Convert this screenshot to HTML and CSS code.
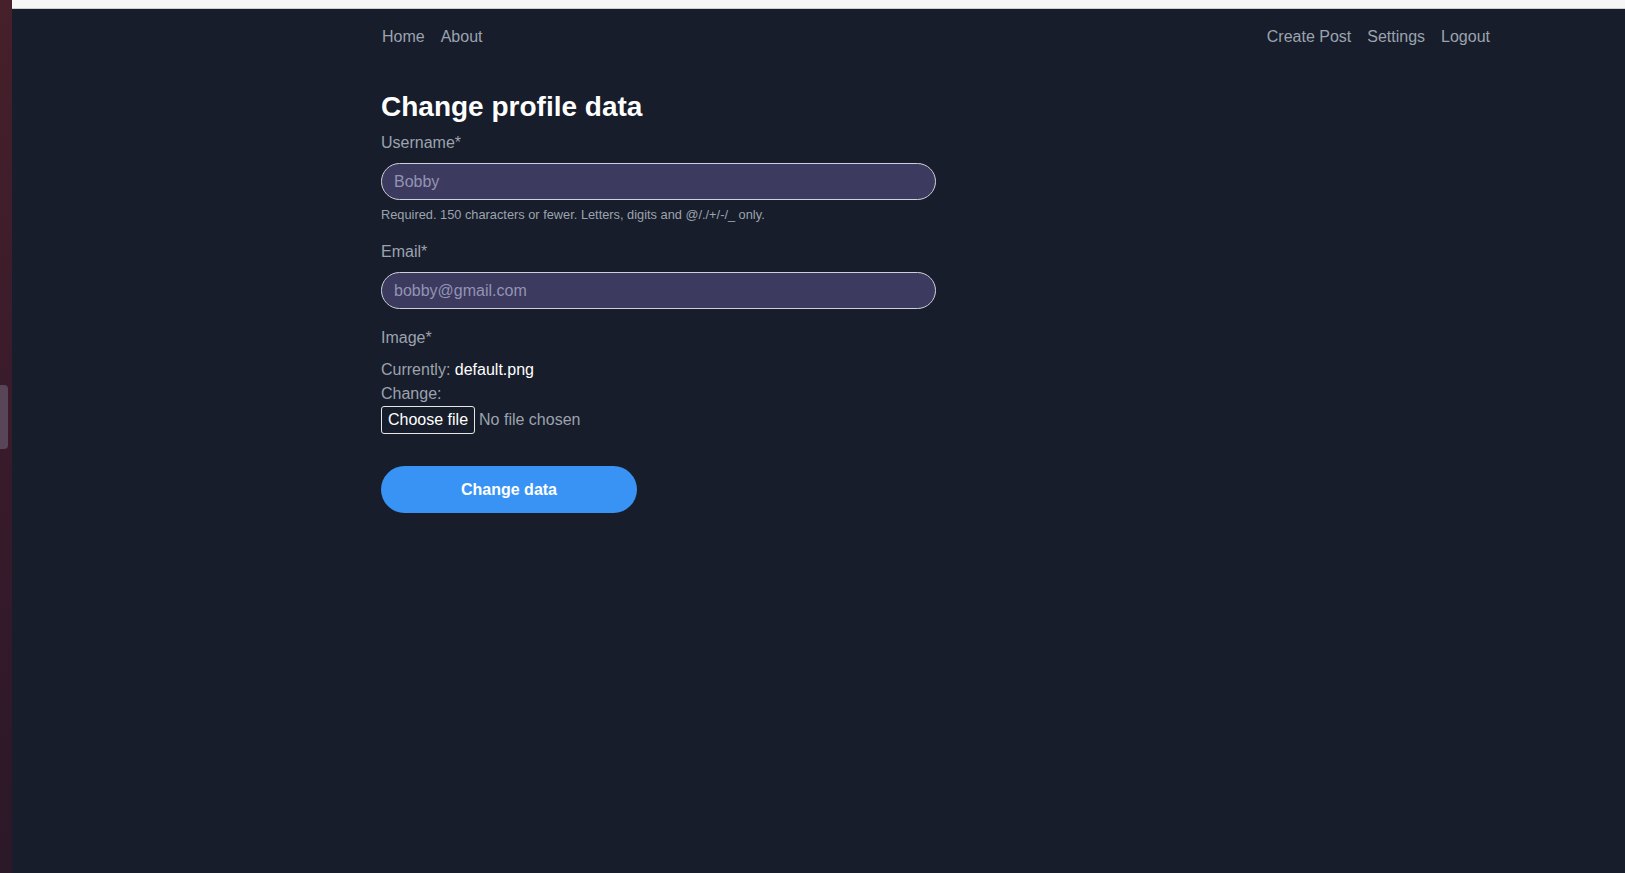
FILE: index.html
```html
<!DOCTYPE html>
<html lang="en">
<head>
<meta charset="utf-8">
<title>Change profile data</title>
<link rel="stylesheet" href="styles.css">
</head>
<body>
<div class="desk-edge"><span class="desk-handle"></span></div>
<div class="window">
  <div class="topbar"></div>
  <div class="container">
    <nav class="nav">
      <div class="nav-group nav-left">
        <a href="#" class="nav-link">Home</a>
        <a href="#" class="nav-link">About</a>
      </div>
      <div class="nav-group">
        <a href="#" class="nav-link">Create Post</a>
        <a href="#" class="nav-link">Settings</a>
        <a href="#" class="nav-link">Logout</a>
      </div>
    </nav>
    <main class="content">
      <h1 class="title">Change profile data</h1>
      <form class="form">
        <div class="group">
          <label class="label" for="username">Username*</label>
          <input class="input" id="username" type="text" value="Bobby">
          <div class="help">Required. 150 characters or fewer. Letters, digits and @/./+/-/_ only.</div>
        </div>
        <div class="group group-email">
          <label class="label" for="email">Email*</label>
          <input class="input" id="email" type="email" value="bobby@gmail.com">
        </div>
        <div class="group group-image">
          <label class="label">Image*</label>
          <div class="line line-current">Currently: <a href="#" class="current-file">default.png</a></div>
          <div class="line">Change:</div>
          <div class="file-row">
            <label class="file-btn">Choose file<input class="file-input" type="file"></label>
            <span class="file-name">No file chosen</span>
          </div>
        </div>
        <button type="button" class="submit">Change data</button>
      </form>
    </main>
  </div>
</div>
</body>
</html>
```
FILE: styles.css
```css
* { box-sizing: border-box; }

html, body {
  margin: 0;
  height: 100%;
}

body {
  display: flex;
  background: #171d2a;
  font-family: "Liberation Sans", Arial, sans-serif;
  font-size: 16px;
  color: #9ca3af;
  overflow: hidden;
}

.desk-edge {
  width: 12px;
  flex: 0 0 12px;
  height: 100%;
  background: linear-gradient(180deg, #46202a 0%, #3a1b2b 45%, #2b1828 100%);
  display: flex;
  flex-direction: column;
  justify-content: flex-start;
  padding-top: 385px;
}

.desk-handle {
  display: block;
  width: 8px;
  height: 64px;
  background: #584557;
  border-radius: 0 4px 4px 0;
}

.window {
  flex: 1;
  display: flex;
  flex-direction: column;
  height: 100%;
}

.topbar {
  height: 9px;
  flex: 0 0 9px;
  background: #f6f6f6;
  border-bottom: 1px solid #cfcfcf;
}

.container {
  width: 1109px;
  margin-left: 369px;
}

.nav {
  display: flex;
  justify-content: space-between;
  padding-top: 19px;
  line-height: 18px;
}

.nav-group {
  display: flex;
  gap: 16px;
}

.nav-left {
  padding-left: 1px;
}

.nav-link {
  color: #9ca3af;
  text-decoration: none;
}

.title {
  margin: 45px 0 0;
  font-size: 28px;
  line-height: 32px;
  font-weight: 700;
  color: #ffffff;
}

.form {
  display: flex;
  flex-direction: column;
  align-items: flex-start;
}

.group {
  display: flex;
  flex-direction: column;
  align-items: flex-start;
}

.label {
  display: block;
  margin-top: 11px;
  line-height: 18px;
  color: #9ca3af;
}

.input {
  margin-top: 11px;
  width: 555px;
  height: 37px;
  padding: 0 12px;
  border: 1px solid #cfd0da;
  border-radius: 19px;
  background: #3c3a5e;
  color: #9294b3;
  font-family: "Liberation Sans", Arial, sans-serif;
  font-size: 16px;
  outline: none;
}

.help {
  margin-top: 7px;
  font-size: 12.8px;
  line-height: 15px;
  color: #9ca3af;
}

.group-email .label {
  margin-top: 21px;
}

.group-image .label {
  margin-top: 20px;
}

.line {
  line-height: 24px;
}

.line-current {
  margin-top: 11px;
}

.current-file {
  color: #ffffff;
  text-decoration: none;
}

.file-row {
  margin-top: 0;
  display: flex;
  align-items: center;
  gap: 4px;
}

.file-btn {
  display: inline-block;
  height: 28px;
  padding: 4px 6px;
  line-height: 18px;
  border: 1px solid #e6e6e6;
  border-radius: 3px;
  color: #ffffff;
  cursor: pointer;
}

.file-input {
  display: none;
}

.file-name {
  color: #9ca3af;
  line-height: 18px;
}

.submit {
  margin-top: 32px;
  width: 256px;
  height: 47px;
  border: none;
  border-radius: 24px;
  background: #3893f4;
  color: #ffffff;
  font-family: "Liberation Sans", Arial, sans-serif;
  font-size: 16px;
  font-weight: 700;
  cursor: pointer;
}
```
